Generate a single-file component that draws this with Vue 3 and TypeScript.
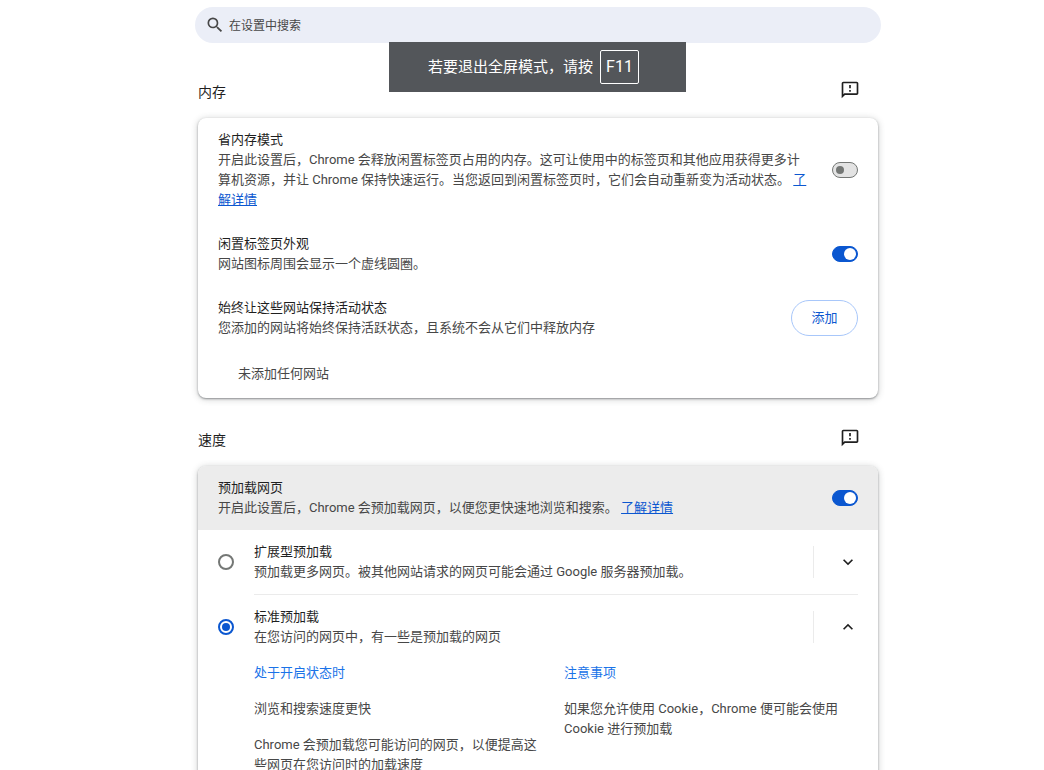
<script setup lang="ts">
import { ref } from 'vue'

interface PreloadOption {
  id: string
  title: string
  summary: string
  expanded: boolean
  details: { heading: string; points: string[] }[]
}

const query = ref('')
const memorySaver = ref(false)
const inactiveAppearance = ref(true)
const preloadPages = ref(true)
const preloadMode = ref('standard')

const options = ref<PreloadOption[]>([
  {
    id: 'extended',
    title: '扩展型预加载',
    summary: '预加载更多网页。被其他网站请求的网页可能会通过 Google 服务器预加载。',
    expanded: false,
    details: [],
  },
  {
    id: 'standard',
    title: '标准预加载',
    summary: '在您访问的网页中，有一些是预加载的网页',
    expanded: true,
    details: [
      {
        heading: '处于开启状态时',
        points: ['浏览和搜索速度更快', 'Chrome 会预加载您可能访问的网页，以便提高这些网页在您访问时的加载速度'],
      },
      {
        heading: '注意事项',
        points: ['如果您允许使用 Cookie，Chrome 便可能会使用 Cookie 进行预加载'],
      },
    ],
  },
])
</script>

<template>
  <div class="page" lang="zh-CN">
    <div class="toast" role="status">
      <span>若要退出全屏模式，请按</span>
      <kbd>F11</kbd>
    </div>

    <label class="search">
      <svg viewBox="0 0 24 24" aria-hidden="true">
        <path d="M15.5 14h-.79l-.28-.27A6.47 6.47 0 0 0 16 9.5 6.5 6.5 0 1 0 9.5 16c1.61 0 3.09-.59 4.23-1.57l.27.28v.79l5 4.99L20.49 19l-4.99-5zm-6 0C7.01 14 5 11.99 5 9.5S7.01 5 9.5 5 14 7.01 14 9.5 11.99 14 9.5 14z" />
      </svg>
      <input v-model="query" type="text" placeholder="在设置中搜索" aria-label="在设置中搜索" />
    </label>

    <main>
      <section>
        <header class="section-head">
          <h2>内存</h2>
          <button class="icon-button" type="button">
            <svg viewBox="0 0 24 24" aria-hidden="true">
              <path d="M20 2H4c-1.1 0-1.99.9-1.99 2L2 22l4-4h14c1.1 0 2-.9 2-2V4c0-1.1-.9-2-2-2zm0 14H5.17L4 17.17V4h16v12zM11 12h2v2h-2zm0-6h2v4h-2z" />
            </svg>
          </button>
        </header>
        <div class="card">
          <div class="row">
            <div class="text">
              <label class="title" for="memory-saver">省内存模式</label>
              <p>开启此设置后，Chrome 会释放闲置标签页占用的内存。这可让使用中的标签页和其他应用获得更多计算机资源，并让 Chrome 保持快速运行。当您返回到闲置标签页时，它们会自动重新变为活动状态。 <a href="#">了解详情</a></p>
            </div>
            <input id="memory-saver" v-model="memorySaver" class="toggle" type="checkbox" role="switch" />
          </div>
          <div class="row">
            <div class="text">
              <label class="title" for="inactive-appearance">闲置标签页外观</label>
              <p>网站图标周围会显示一个虚线圆圈。</p>
            </div>
            <input id="inactive-appearance" v-model="inactiveAppearance" class="toggle" type="checkbox" role="switch" />
          </div>
          <div class="row">
            <div class="text">
              <h3 class="title">始终让这些网站保持活动状态</h3>
              <p>您添加的网站将始终保持活跃状态，且系统不会从它们中释放内存</p>
            </div>
            <button class="add" type="button">添加</button>
          </div>
          <p class="empty">未添加任何网站</p>
        </div>
      </section>

      <section>
        <header class="section-head">
          <h2>速度</h2>
          <button class="icon-button" type="button">
            <svg viewBox="0 0 24 24" aria-hidden="true">
              <path d="M20 2H4c-1.1 0-1.99.9-1.99 2L2 22l4-4h14c1.1 0 2-.9 2-2V4c0-1.1-.9-2-2-2zm0 14H5.17L4 17.17V4h16v12zM11 12h2v2h-2zm0-6h2v4h-2z" />
            </svg>
          </button>
        </header>
        <div class="card">
          <div class="row shaded">
            <div class="text">
              <label class="title" for="preload-pages">预加载网页</label>
              <p>开启此设置后，Chrome 会预加载网页，以便您更快速地浏览和搜索。 <a href="#">了解详情</a></p>
            </div>
            <input id="preload-pages" v-model="preloadPages" class="toggle" type="checkbox" role="switch" />
          </div>

          <div v-for="option in options" :key="option.id" class="option">
            <div class="option-row">
              <input :id="option.id" v-model="preloadMode" class="radio" type="radio" name="preload" :value="option.id" />
              <div class="text">
                <label class="title" :for="option.id">{{ option.title }}</label>
                <p>{{ option.summary }}</p>
              </div>
              <div class="expander">
                <button class="icon-button" type="button" :aria-expanded="option.expanded" @click="option.expanded = !option.expanded">
                  <svg viewBox="0 0 24 24" aria-hidden="true">
                    <path v-if="option.expanded" d="M12 8l-6 6 1.41 1.41L12 10.83l4.59 4.58L18 14z" />
                    <path v-else d="M16.59 8.59L12 13.17 7.41 8.59 6 10l6 6 6-6z" />
                  </svg>
                </button>
              </div>
            </div>
            <div v-if="option.expanded && option.details.length" class="details">
              <div v-for="column in option.details" :key="column.heading" class="column">
                <h4>{{ column.heading }}</h4>
                <p v-for="point in column.points" :key="point">{{ point }}</p>
              </div>
            </div>
          </div>
        </div>
      </section>
    </main>
  </div>
</template>

<style>
body {
  margin: 0;
  background: #fff;
}
</style>

<style scoped>
.page {
  position: relative;
  box-sizing: border-box;
  height: 100vh;
  padding: 7px 0 0 32px;
  overflow-y: auto;
  scrollbar-width: none;
  color: #1f1f1f;
  font: 13px/20px Roboto, "Noto Sans CJK SC", sans-serif;
}

h2,
h3,
h4,
p {
  margin: 0;
  font-size: inherit;
  font-weight: 400;
}

button,
input {
  font: inherit;
}

svg {
  display: block;
  fill: currentColor;
}

.toast {
  position: absolute;
  z-index: 1;
  top: 42px;
  right: 0;
  left: 31px;
  display: flex;
  align-items: center;
  gap: 7px;
  box-sizing: border-box;
  width: fit-content;
  height: 50px;
  margin: 0 auto;
  padding: 0 47px 0 39px;
  background: #53565a;
  color: #fff;
  font-size: 15px;
  line-height: 22px;
  white-space: nowrap;
}

kbd {
  padding: 5px;
  border: 1px solid #fff;
  border-radius: 2px;
  font-family: inherit;
  font-size: 16px;
}

.search {
  display: flex;
  align-items: center;
  gap: 4px;
  box-sizing: border-box;
  max-width: 686px;
  height: 36px;
  margin: 0 auto;
  padding: 0 20px 0 10px;
  border-radius: 18px;
  background: #ebeef7;
  color: #474747;
}

.search svg {
  width: 20px;
  height: 20px;
}

.search input {
  flex: 1;
  min-width: 0;
  padding: 2px 0 0;
  border: 0;
  outline: 0;
  background: none;
  color: #1f1f1f;
  font-size: 12px;
}

.search input::placeholder {
  color: #474747;
  opacity: 1;
}

main {
  max-width: 680px;
  margin: 0 auto;
  padding: 7px 0 24px;
}

.section-head {
  display: flex;
  align-items: center;
  justify-content: space-between;
  padding: 26px 18px 14px 0;
}

.section-head h2 {
  padding-top: 4px;
  font-size: 14px;
  line-height: 24px;
}

.icon-button {
  width: 20px;
  height: 20px;
  padding: 0;
  border: 0;
  background: none;
  color: #1f1f1f;
}

.icon-button svg {
  width: 20px;
  height: 20px;
}

.card {
  overflow: hidden;
  border-radius: 8px;
  background: #fff;
  box-shadow: 0 1px 2px rgba(60, 64, 67, 0.5), 0 1px 6px 1px rgba(60, 64, 67, 0.2);
}

.row {
  display: flex;
  align-items: center;
  gap: 24px;
  padding: 12px 20px;
}

.shaded {
  background: #ececec;
}

.text {
  flex: 1;
  min-width: 0;
  color: #474747;
}

.title {
  display: block;
  color: #1f1f1f;
}

a {
  color: #0b57d0;
}

.empty {
  padding: 14px 40px;
  color: #474747;
}

.add {
  min-width: 67px;
  height: 36px;
  padding: 0 19px;
  margin: 2px 0;
  border: 1px solid #a8c7fa;
  border-radius: 18px;
  background: #fff;
  color: #0b57d0;
}

.toggle {
  display: flex;
  align-items: center;
  flex: none;
  box-sizing: border-box;
  width: 26px;
  height: 16px;
  margin: 0;
  padding: 0 3px;
  appearance: none;
  border: 1px solid #747775;
  border-radius: 8px;
  background: #e3e3e3;
}

.toggle::before {
  width: 8px;
  height: 8px;
  border-radius: 50%;
  background: #747775;
  content: "";
}

.toggle:checked {
  justify-content: flex-end;
  padding: 0 1px;
  border-color: #0b57d0;
  background: #0b57d0;
}

.toggle:checked::before {
  width: 12px;
  height: 12px;
  background: #fff;
}

.option-row {
  display: flex;
  align-items: center;
  padding: 12px 20px;
}

.option + .option::before {
  display: block;
  height: 1px;
  margin: 0 20px 0 56px;
  background: #ebebeb;
  content: "";
}

.radio {
  display: grid;
  place-items: center;
  flex: none;
  box-sizing: border-box;
  width: 16px;
  height: 16px;
  margin: 0 20px 0 0;
  appearance: none;
  border: 2px solid #747775;
  border-radius: 50%;
}

.radio:checked {
  border-color: #0b57d0;
}

.radio:checked::before {
  width: 8px;
  height: 8px;
  border-radius: 50%;
  background: #0b57d0;
  content: "";
}

.expander {
  display: flex;
  align-items: center;
  height: 32px;
  padding-left: 24px;
  border-left: 1px solid #ebebeb;
}

.details {
  display: grid;
  grid-template-columns: 1fr 1fr;
  gap: 16px;
  padding: 4px 20px 16px 56px;
  color: #474747;
}

.column {
  display: flex;
  flex-direction: column;
  gap: 16px;
}

h4 {
  color: #1a73e8;
}
</style>
